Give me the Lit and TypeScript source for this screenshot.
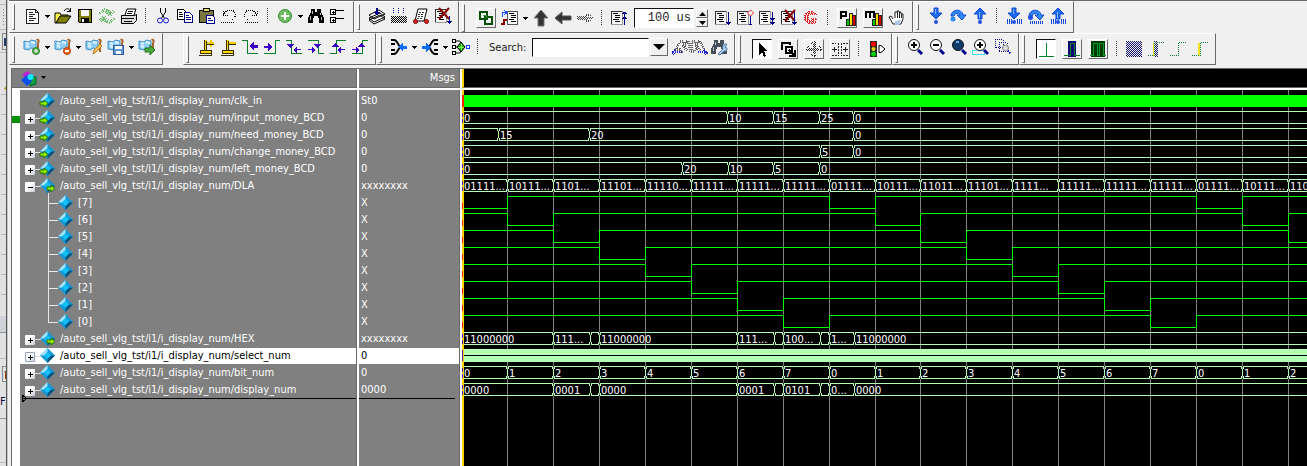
import { LitElement, html, svg, css, nothing } from "lit";
import { customElement, property } from "lit/decorators.js";

/* ---------- icons, all on an 18 x 18 grid ---------- */

const page = (x: number, y: number) => svg`
  <path d="M${x} ${y}h9l3 3v11h-12z" fill="#fff" stroke="#222"/>
  <path d="M${x + 9} ${y}v3h3" stroke="#222"/>
  <path d="M${x + 2} ${y + 3}h4M${x + 2} ${y + 5}h6M${x + 2} ${y + 7}h4M${x + 2} ${y + 9}h7M${x + 2} ${y + 11}h5" stroke="#222"/>`;

const listing = svg`
  <path d="M1 2h11v14H1z" fill="#f6f6f6"/><path d="M12.500 2v14M1 15.500h11" stroke="#999"/><path d="M1.500 2v13M1 2.500h11" stroke="#333"/>
  <path d="M3 4.500h5M5 6.500h5M5 8.500h5M3 10.500h6M5 12.500h5" stroke="#000"/>`;

const flags = svg`
  <path d="M1 3l5 1 2-2 5 1v8l-5-1-2 2-5-1z" fill="#8fcdf5" stroke="#4592c8" class="soft"/>
  <path d="M3 5l3 1M8 4l4 1M3 8l3 1" stroke="#dff3ff" stroke-width="2" class="soft"/>
  <path d="M13.500 2c2-1 3 1 1.500 3v9" stroke="#a8662a" stroke-width="2" class="soft"/>`;

const magnifier = (fill: string) => svg`
  <path d="M12 12l4 4" stroke="#00008b" stroke-width="3" class="soft"/>
  <circle cx="8" cy="7" r="5.500" fill="${fill}" stroke="#111" class="soft"/>`;

const bluedown = svg`<path d="M7 1h4v5h4l-6 6-6-6h4z" fill="#1e6bf0" stroke="#1449d8" class="soft"/><path d="M8 2v5" stroke="#79b8ff"/>`;
const blueup = svg`<path d="M9 1l6 6h-4v5H7V7H3z" fill="#1e6bf0" stroke="#1449d8" class="soft"/><path d="M8 5v6" stroke="#79b8ff"/>`;
const blueover = svg`<path d="M2 9c0-7 11-8 12-1h3l-4 5-5-5h3c-1-3-5-2-6 1z" fill="#2f8cf5" stroke="#1449d8" class="soft"/>`;
const ball = svg`<circle cx="9" cy="15" r="2" fill="#1e4fe8" class="soft"/>`;
const bars = svg`<path d="M2.500 12v5M4.500 12v5M6.500 12v5M12.500 12v5M14.500 12v5M16.500 12v5" stroke="#1449d8"/>`;
const graph = svg`<path d="M8 10h3v6H8z" fill="#0c0" stroke="#222"/><path d="M11 4h3v12h-3z" fill="#ffe000" stroke="#222"/><path d="M14 6h3v10h-3z" fill="#d00" stroke="#222"/>`;
const downnavy = svg`<path d="M14.500 3v13M12 13.500h5M13 14.500h3" stroke="#00008b"/>`;
const cross = svg`<path d="M5 1l10 11M15 1L5 12" stroke="#8b0000" stroke-width="2" class="soft"/>`;
const binoc = (c: string) => svg`<path d="M4 2h4v3h2V2h4v3l3 6v5h-5v-5h-1V9H7v2H6v5H1v-5l3-6z" fill="${c}"/><path d="M5.500 4v3M3.500 9v4M13.500 6v2M14.500 10v3" stroke="#bbb"/>`;
const pins = svg`<path d="M7.500 2v11" stroke="#3a3000"/><path d="M8.500 2v11" stroke="#ffd800" stroke-width="2"/><path d="M9.500 3v10" stroke="#3a3000"/>
  <path d="M3 12.500h11v3H3z" fill="#ffd800" stroke="#3a3000"/><path d="M2 17.500h12M14.500 13v5" stroke="#3a3000"/>`;

const ARROW = "#3b00c8";
const downHead = (x: number) => svg`<path d="M${x - 3} 6h7v1h-1v1h-1v1h-1v1h-1v-1h-1v-1h-1v-1h-1z" fill="${ARROW}"/>`;
const upHead = (x: number) => svg`<path d="M${x - 3} 9h7v-1h-1v-1h-1v-1h-1v-1h-1v1h-1v1h-1v1h-1z" fill="${ARROW}"/>`;
const fromRight = svg`<path d="M8 11.500h1v-1h1v-1h1v-1h1v6h-1v-1h-1v-1h-1v-1h-1zM12 11h4v1h-4z" fill="${ARROW}"/>`;
const fromLeft = svg`<path d="M9 11.500h-1v-1h-1v-1h-1v-1h-1v6h1v-1h1v-1h1v-1h1zM5 11H1v1h4z" fill="${ARROW}"/>`;

const ICONS: Record<string, unknown> = {
  doc: page(3.500, 2.500),
  open: svg`<path d="M1 6h5l1 2h7v2H6l-4 6H1z" fill="#fff34d" stroke="#000" class="soft"/><path d="M2 16l4-7h11l-5 7z" fill="#808000" stroke="#000" class="soft"/><path d="M10 4c2-3 5-3 6 0M13 4.500h4M16.500 1v4" stroke="#000" class="soft"/>`,
  save: svg`<path d="M2.500 2.500h13v13h-12l-1-1z" fill="#808000" stroke="#000"/><path d="M5 3h8v6H5z" fill="#f4f4f4"/><path d="M5 11h8v5H5z" fill="#000"/><path d="M6 12h2v3H6z" fill="#fff"/>`,
  recycle: svg`<path d="M2 7c4-6 8-5 10-1M16 11c-4 6-8 5-10 1M2 14l4-4 4 4M8 4l4 4 4-4" stroke="#6cbc6c" stroke-width="3" stroke-dasharray="1 1"/>`,
  print: svg`<path d="M5 8l2-6h9l-2 6" fill="#fff" stroke="#000" class="soft"/><path d="M8 4.500h5M7 6.500h5" stroke="#000"/><path d="M1.500 8.500h13l2-1v6l-3 3h-12z" fill="#ddd" stroke="#000" class="soft"/><path d="M2 11.500h12M4 14.500h8" stroke="#000"/>`,
  cut: svg`<path d="M6.500 1v4l4 6M11.500 1v4l-4 6" stroke="#000" class="soft"/><circle cx="6" cy="13.500" r="2.500" stroke="#1414d8" class="soft"/><circle cx="12" cy="13.500" r="2.500" stroke="#1414d8" class="soft"/>`,
  copy: svg`<path d="M1.500 2.500h6l2 2v8h-8z" fill="#fff" stroke="#000"/><path d="M3 5.500h3M3 7.500h4M3 9.500h4" stroke="#000"/><path d="M8.500 5.500h5l3 3v7h-8z" fill="#fff" stroke="#00008b"/><path d="M10 8.500h3M10 10.500h5M10 12.500h5" stroke="#00008b"/>`,
  paste: svg`<path d="M1.500 3.500h14v12h-14z" fill="#7d7840" stroke="#000"/><path d="M5 1.500h6v3H5z" fill="#e8e060" stroke="#000"/><path d="M8.500 8.500h6l2 2v6h-8z" fill="#fff" stroke="#00008b"/><path d="M10 11.500h3M10 13.500h5" stroke="#00008b"/>`,
  undo: svg`<path d="M4 6c3-4 10-4 11 0s-1 6-4 7M1 15.500h14M3 4v4h5M3 8l4-4" stroke="#000" stroke-dasharray="1 1"/>`,
  redo: svg`<path d="M14 6c-3-4-10-4-11 0s1 6 4 7M3 15.500h14M15 4v4h-5M15 8l-4-4" stroke="#000" stroke-dasharray="1 1"/>`,
  add: svg`<circle cx="9" cy="9" r="6.500" fill="#6dbb5f" stroke="#3c8f3c" class="soft"/><path d="M9 5v8M5 9h8" stroke="#fff" stroke-width="2"/>`,
  find: binoc("#000"),
  expand: svg`<path d="M1.500 2.500h5v5h-5zM1.500 10.500h5v5h-5z" fill="#fff" stroke="#000"/><path d="M3 5.500h3M4.500 4v3M3 13.500h3M4.500 12v3M7 3.500h8M7 11.500h8" stroke="#000"/>`,
  stack: svg`<path d="M1 13l5 4 11-5-5-4zM1 11l5 4 11-5-5-4zM1 8l5 4 11-5-6-4z" fill="#fff" stroke="#000" class="soft"/><path d="M8 1h2v4h2.500L9 9 5.500 5H8z" fill="#00008b"/>`,
  rain: svg`<path d="M3.500 1v6M8.500 1v6M13.500 1v6" stroke="#1414a0" stroke-dasharray="1 1"/><path d="M1 9.500h16M1 11.500h16M1 13.500h16M1 15.500h16" stroke="#000" stroke-dasharray="1 1"/><path d="M2 10.500h16M2 12.500h16M2 14.500h16" stroke="#000" stroke-dasharray="1 1"/>`,
  cart: svg`<path d="M6 2h9l-3 12H3z" fill="#fff" stroke="#000" class="soft"/><path d="M7 5h6M6 7h6M6 9h6M5 11h6" stroke="#333" stroke-dasharray="2 1"/><circle cx="3.500" cy="14.500" r="2" fill="#d22" stroke="#700" class="soft"/><circle cx="14.500" cy="14.500" r="2" fill="#d22" stroke="#700" class="soft"/>`,
  nocompile: svg`${listing}${cross}<path d="M15.500 9v8M13 14.500h5M14 15.500h3" stroke="#00008b"/>`,
  link: svg`<path d="M3 3h7v7H3z" stroke="#064f06" stroke-width="2"/><path d="M8 8h7v7H8z" stroke="#064f06" stroke-width="2"/><path d="M6 6h3v3" stroke="#3c9a3c"/>`,
  restart: svg`<path d="M6.500 2.500h10v13h-10z" fill="#fafafa" stroke="#555"/><path d="M8 4.500h5M10 6.500h5M10 8.500h5M8 10.500h5M10 12.500h5" stroke="#000"/><path d="M1.500 8V3.500H5M3 1l3 2.500L3 6" stroke="#1450ff"/><path d="M0 15h3V11h3" stroke="#8b0000" stroke-width="2"/>`,
  up: svg`<path d="M9 1l7 8h-4v8H6V9H2z" fill="#333" stroke="#777" class="soft"/>`,
  left: svg`<path d="M1 9l7-6v4h9v4H8v4z" fill="#333" stroke="#555" class="soft"/>`,
  right: svg`<path d="M1 7.500h9M2 8.500h15M1 9.500h15M2 10.500h9M10 5.500h3M10 6.500h5M10 11.500h5M10 12.500h3" stroke="#444" stroke-dasharray="1 1"/>`,
  runlen: svg`${listing}<path d="M14.500 3v13M12 4.500h5M12 9.500h5M13 3.500h3M13 8.500h3" stroke="#00008b"/>`,
  run: svg`${listing}${downnavy}`,
  runc: svg`${listing}<path d="M14.500 7v9M13 15.500h3" stroke="#00008b"/><path d="M14.500 1l3 3-3 3-3-3z" fill="#fff" stroke="#d22" class="soft"/>`,
  runall: svg`${listing}<path d="M14.500 3v13M12 9.500h5M12 13.500h5M13 14.500h3M13 10.500h3" stroke="#00008b"/>`,
  brk: svg`${listing}${cross}${downnavy}`,
  stop: svg`<path d="M5 3.500h8M4 5.500h11M3 7.500h4M3 9.500h4M3 11.500h10M5 13.500h9M9 9.500h6" stroke="#d22" stroke-dasharray="1 1"/><path d="M6 2.500h6M3 4.500h12M2 6.500h5M2 8.500h5M2 10.500h5M10 10.500h5M4 12.500h10M6 14.500h7" stroke="#d22" stroke-dasharray="2 1"/>`,
  perf: svg`${graph}<path d="M3 10V3h5v4H3" stroke="#000" stroke-width="2"/>`,
  mem: svg`${graph}<path d="M2 9V3h8v6M6 3v6" stroke="#000" stroke-width="2"/>`,
  hand: svg`<path d="M5 10L3 7 1 8l4 7h8l2-5V5h-2V3h-2V2H9v1H7v6" fill="#fff" stroke="#222" class="soft"/><path d="M9 3v6M11 3v6M13 5v4" stroke="#222"/><path d="M7 12l6-1-2 5H7z" fill="#a9c8e8"/>`,
  stepin: svg`${bluedown}${ball}`,
  stepover: svg`${blueover}<circle cx="4" cy="12" r="2.500" fill="#2f8cf5" class="soft"/>`,
  stepout: svg`${blueup}${ball}`,
  stepin2: svg`${bluedown}${ball}${bars}`,
  stepover2: svg`${blueover}<circle cx="3.500" cy="10.500" r="2.500" fill="#1e4fe8" class="soft"/><path d="M3 15h14" stroke="#1449d8" stroke-width="3" stroke-dasharray="1 1"/>`,
  stepout2: svg`${blueup}${ball}${bars}`,
  bmadd: svg`${flags}<circle cx="13" cy="13" r="3.500" fill="#5cb04f" stroke="#2f7f2f" class="soft"/><path d="M13 11v4M11 13h4" stroke="#fff" class="soft"/>`,
  bmdel: svg`${flags}<circle cx="13" cy="13" r="3.500" fill="#f0641e" stroke="#c03c00" class="soft"/><path d="M11 13h4" stroke="#fff" stroke-width="2"/>`,
  bmedit: svg`${flags}<path d="M8 16l1-4 6-6 2 2-6 6z" fill="#ffc05a" stroke="#b87820" class="soft"/>`,
  bmsave: svg`${flags}<path d="M6.500 7.500h10v9h-10z" fill="#5f93d8" stroke="#2f5fa8"/><path d="M8 8h7v3H8zM9 13h5v3H9z" fill="#fff"/>`,
  bmgo: svg`${flags}<path d="M7 10h5V7l5 5-5 5v-3H7z" fill="#4aa83a" stroke="#24701c" class="soft"/>`,
  cursadd: svg`${pins}<path d="M10 5h7M14 2v7" stroke="#f0cc00" stroke-width="2"/><path d="M10 6.500h7" stroke="#3a3000"/>`,
  cursdel: svg`${pins}<path d="M10 5h7" stroke="#f0cc00" stroke-width="2"/><path d="M10 6.500h7" stroke="#3a3000"/>`,
  prevedge: svg`<path d="M1 2.500h5v13h11" stroke="#0a7f2c"/><path d="M8 8l5-4v3h4v3h-4v3z" fill="${ARROW}"/>`,
  nextedge: svg`<path d="M1 15.500h11V2.500h5" stroke="#0a7f2c"/><path d="M10 9L5 5v3H1v2h4v3z" fill="${ARROW}"/>`,
  prevfall: svg`<path d="M1 2.500h5v13h11" stroke="#0a7f2c"/>${downHead(5)}${fromRight}`,
  nextfall: svg`<path d="M1 2.500h10v13h6" stroke="#0a7f2c"/>${downHead(10)}${fromLeft}`,
  prevrise: svg`<path d="M1 15.500h6V2.500h10" stroke="#0a7f2c"/>${upHead(6)}${fromRight}`,
  nextrise: svg`<path d="M1 15.500h10V2.500h6" stroke="#0a7f2c"/>${upHead(10)}${fromLeft}`,
  drivers: svg`<path d="M1 2h3c4 0 4 7 7 7-3 0-3 7-7 7H1M1 6h4M1 12h4" stroke="#000" stroke-width="2" class="soft"/><path d="M8 9l5-4v3h4v3h-4v3z" fill="#0a6cff"/>`,
  readers: svg`<path d="M17 2h-3c-4 0-4 7-7 7 3 0 3 7 7 7h3M17 6h-4M17 12h-4" stroke="#000" stroke-width="2" class="soft"/><path d="M10 9L5 5v3H1v3h4v3z" fill="#0a6cff"/>`,
  chase: svg`<path d="M3 3h4c3 0 2 5 6 6-4 1-3 6-6 6H3M3 9h5" stroke="#000" class="soft"/><path d="M.500 1.500h3v3h-3zM.500 7.500h3v3h-3zM.500 13.500h3v3h-3z" fill="#fff" stroke="#000"/><path d="M9 4l4 5-4 5-4-5z" fill="#1fa81f" stroke="#000" class="soft"/><path d="M9 6v6M6 9h6" stroke="#7dff4d"/><path d="M14.500 7.500h3v3h-3z" fill="#fff" stroke="#0a3cff"/>`,
  fprev: svg`<path d="M8 3h3v3h3V3h2l2 8v4M7 5l-3 6h4l2 4M11 7l4 6" stroke="#666" stroke-width="3" stroke-dasharray="1 1"/><path d="M1 14h9M3 12l-3 3 3 2" stroke="#22c" stroke-width="2" stroke-dasharray="1 1"/>`,
  fnext: svg`<path d="M2 3h3v3h3V3h2l4 8M1 5v8h4l2-4M6 7l4 6" stroke="#666" stroke-width="3" stroke-dasharray="1 1"/><path d="M8 14h9M14 12l3 3-3 2" stroke="#22c" stroke-width="2" stroke-dasharray="1 1"/>`,
  fopt: svg`${binoc("#444e58")}<path d="M8 16l5-5c-1-4 1-5 4-5l-2 3 2 1c0 3-1 3-3 3l-4 4z" fill="#a9cdf0" stroke="#5580a8" class="soft"/>`,
  pointer: svg`<path d="M6 3v12l3-3 2 5 2-1-2-5h4z" fill="#000"/>`,
  zoombox: svg`<path d="M3 10V3h8v2" stroke="#000" stroke-width="2"/><path d="M7 7h6v6H7z" stroke="#000" stroke-width="2"/><path d="M10 10l5 5M16 10v6h-6" stroke="#000" stroke-width="2"/>`,
  pan: svg`<path d="M9 1v16M1 9h16M6 4l3-3 3 3M6 14l3 3 3-3M4 6L1 9l3 3M14 6l3 3-3 3M8 4v10M10 4v10M4 8h10M4 10h10" stroke="#222" stroke-dasharray="1 1"/>`,
  twocur: svg`<path d="M1 3.500h4M7.500 3v13M10.500 3v13M12 3.500h5M1 15.500h5M12 15.500h5" stroke="#222" stroke-dasharray="2 1"/><path d="M1 9.500h5M12 9.500h5M3.500 7v5M14.500 7v5" stroke="#222"/>`,
  light: svg`<path d="M3 1h7v16H3z" fill="#282828"/><circle cx="6.500" cy="4" r="2.500" fill="#f00" class="soft"/><circle cx="6.500" cy="9" r="2" fill="#e6d800" class="soft"/><circle cx="6.500" cy="14" r="2.500" fill="#0c0" class="soft"/><path d="M12 5.500l2 0 4 3.500-4 3.500h-2z" fill="#fff" stroke="#000" class="soft"/>`,
  zin: svg`${magnifier("#fff")}<path d="M5 7h6M8 4v6" stroke="#000" stroke-width="2"/>`,
  zout: svg`${magnifier("#fff")}<path d="M5 7h6" stroke="#000" stroke-width="2"/>`,
  zfull: svg`${magnifier("#0d3a66")}<path d="M6 4h3" stroke="#6fa8dc" stroke-width="2"/>`,
  zcur: svg`<path d="M.500 12.500h12v4H.500z" stroke="#3fe0f0"/>${magnifier("#fff")}<path d="M5 7h6M8 4v6" stroke="#000" stroke-width="2"/>`,
  zsel: svg`<path d="M1 1.500h8v8H1zM5 4.500h8v9H5z" stroke="#00008b" stroke-dasharray="1 1"/><circle cx="11.500" cy="10" r="3" fill="#ddd" stroke="#888" class="soft"/><path d="M14 13l3 3" stroke="#1414c8" stroke-dasharray="1 1" stroke-width="2"/>`,
  w1: svg`<path d="M9.500 3v13M2 16.500h15" stroke="#0a7f2c"/>`,
  w2: svg`<path d="M5 1h8v16H5z" fill="#0a0a70"/><path d="M1 15.500h6V3.500h4v12h6" stroke="#0a7f2c"/>`,
  w3: svg`<path d="M2 1h14v16H2z" fill="#003c00"/><path d="M1 15.500h3V3.500h4v12h2V3.500h4v12h3" stroke="#0a9a2c"/>`,
  h1: svg`${[1, 3, 5, 7, 9, 11, 13, 15].map(y => svg`<path d="M1 ${y + 0.5}h16M2 ${y + 1.5}h16" stroke="#10106a" stroke-dasharray="1 1"/>`)}`,
  h2: svg`${[1, 3, 5, 7, 9, 11, 13, 15].map(y => svg`<path d="M7 ${y + 0.5}h4M8 ${y + 1.5}h4" stroke="#10106a" stroke-dasharray="1 1"/>`)}<path d="M6.500 3v13" stroke="#f0e020"/><path d="M1 15.500h6V2.500h10" stroke="#0a7f2c" stroke-dasharray="1 1"/>`,
  h3: svg`<path d="M1 15.500h8V2.500h8" stroke="#0a7f2c" stroke-dasharray="1 1"/>`,
  h4: svg`<path d="M8 3v13" stroke="#f0e020" stroke-width="2"/><path d="M1 15.500h8V2.500h8" stroke="#0a7f2c" stroke-dasharray="1 1"/>`,
};

const TITLES: Record<string, string> = { doc: "New", open: "Open", save: "Save", print: "Print", cut: "Cut", copy: "Copy", paste: "Paste", undo: "Undo", redo: "Redo", find: "Find" };

type Item = string; // "icon", "icon!" raised, "icon*" pressed, "icon~" narrow, "v" arrow, "|" separator

@customElement("tool-bar")
class ToolBar extends LitElement {
  @property({ attribute: false }) items: Item[] = [];
  @property({ attribute: false }) more: Item[] = [];

  static styles = css`
    :host { display: flex; align-items: center; box-sizing: border-box; flex: none; border-style: solid; border-width: 1px;
      border-color: #fff #696969 #696969 #fff; padding: 0 4px 2px 2px; background: #f0f0f0; font: 11px "DejaVu Sans Condensed", "DejaVu Sans", sans-serif; }
    :host(.low) { padding-bottom: 4px; }
    :host(.tall) { padding: 2px 4px 0 2px; }
    :host(.tall.low) { padding-top: 0; }
    .grip { align-self: stretch; width: 3px; box-sizing: border-box; border: 1px solid; border-color: #fff #696969 #696969 #fff; margin: 2px 6px 0 0; }
    :host(.low) .grip { margin-bottom: -3px; }
    :host(.tall) .grip { margin: 0 8px 0 0; }
    :host(.tall.low) .grip { margin: 1px 8px 1px 0; }
    button { display: block; border: 0; padding: 0; margin: 0; background: none; flex: none; }
    .tool { width: 22px; height: 20px; padding: 1px 2px; }
    .slim { width: 18px; padding: 1px 0; }
    .raised, .pressed { width: 20px; height: 20px; margin: 0 3px; padding: 0; border: 1px solid; border-color: #fff #696969 #696969 #fff; }
    .pressed { border-color: #111 #fff #fff #111; background: #fff; }
    .arrow { width: 9px; height: 20px; }
    .sep { width: 2px; height: 16px; margin: 0 5px; background: repeating-linear-gradient(#333 0 1px, transparent 1px 2px); background-size: 1px 100%; background-repeat: no-repeat; flex: none; }
    svg { display: block; fill: none; shape-rendering: crispEdges; }
    .soft { shape-rendering: auto; }
  `;

  private draw(list: Item[]) {
    return list.map(raw => {
      if (raw === "|") return html`<span class="sep"></span>`;
      if (raw === "v") return html`<button class="arrow" aria-label="More"><svg width="9" height="5"><path d="M2 1h5v1h-1v1h-1v1h-1v-1h-1v-1h-1z" fill="#000"/></svg></button>`;
      const mark = raw.slice(-1);
      const name = raw.replace(/[!*~]/g, "");
      const cls = mark === "!" ? "raised" : mark === "*" ? "pressed" : mark === "~" ? "tool slim" : "tool";
      return html`<button class=${cls} aria-label=${TITLES[name] ?? name}><svg width="18" height="18" viewBox="0 0 18 18">${ICONS[name]}</svg></button>`;
    });
  }

  render() {
    return html`<span class="grip"></span>${this.draw(this.items)}<slot></slot>${this.draw(this.more)}`;
  }
}

/* ---------- signals ---------- */

interface Signal {
  name: string; value: string; kind: "clock" | "bus" | "bit" | "dense";
  icon?: "in" | "out" | "plain"; toggle?: string; child?: boolean; selected?: boolean;
  edges?: number[]; labels?: string[]; bit?: number;
}

const P = "/auto_sell_vlg_tst/i1/i_display_num/";
const ORIGIN = 462;
const grid = Array.from({ length: 60 }, (_, i) => Math.round(507 + i * 45.94) - ORIGIN);
const slots = [0, ...grid];
const shown = grid.slice(0, 18);
const at = (...xs: number[]) => xs.map(x => x - ORIGIN);
const digitEdges = at(553, 590, 599, 737, 774, 783, 820, 829, 854);

const SIGNALS: Signal[] = [
  { name: P + "clk_in", value: "St0", kind: "clock", icon: "in" },
  { name: P + "input_money_BCD", value: "0", kind: "bus", icon: "in", toggle: "+", edges: at(727, 773, 819, 853), labels: ["0", "10", "15", "25", "0"] },
  { name: P + "need_money_BCD", value: "0", kind: "bus", icon: "in", toggle: "+", edges: at(498, 589, 853), labels: ["0", "15", "20", "0"] },
  { name: P + "change_money_BCD", value: "0", kind: "bus", icon: "in", toggle: "+", edges: at(820, 853), labels: ["0", "5", "0"] },
  { name: P + "left_money_BCD", value: "0", kind: "bus", icon: "in", toggle: "+", edges: at(682, 728, 773, 819), labels: ["0", "20", "10", "5", "0"] },
  { name: P + "DLA", value: "xxxxxxxx", kind: "bus", icon: "out", toggle: "-", edges: shown,
    labels: ["01111...", "10111...", "1101...", "11101...", "11110...", "11111...", "11111...", "11111...", "01111...", "10111...", "11011...", "11101...", "1111...", "11111...", "11111...", "11111...", "01111...", "10111...", "11011..."] },
  ...[7, 6, 5, 4, 3, 2, 1, 0].map(b => ({ name: `[${b}]`, value: "X", kind: "bit", child: true, bit: b }) as Signal),
  { name: P + "HEX", value: "xxxxxxxx", kind: "bus", icon: "out", toggle: "+", edges: digitEdges, labels: ["11000000", "111...", "", "11000000", "111...", "", "100...", "", "1...", "11000000"] },
  { name: P + "select_num", value: "0", kind: "dense", icon: "plain", toggle: "+", selected: true },
  { name: P + "bit_num", value: "0", kind: "bus", icon: "plain", toggle: "+", edges: shown, labels: Array.from({ length: 19 }, (_, i) => String(i % 8)) },
  { name: P + "display_num", value: "0000", kind: "bus", icon: "plain", toggle: "+", edges: digitEdges, labels: ["0000", "0001", "", "0000", "0001", "", "0101", "", "0...", "0000"] },
];

const END = 2600;

const diamond = (cx: number) => svg`
  <path d="M${cx - 7.5} 7.500l7.500-7.500 7.500 7.500-7.500 7.500z" fill="#1499d8"/>
  <path d="M${cx - 7.5} 7.500l7.500-7.500v4l-3.500 3.500z" fill="#a5e4fb"/>
  <path d="M${cx} 15l7.500-7.500h-4l-3.500 3.500z" fill="#06527a"/>
  <path d="M${cx - 3.5} 7.500l3.500-3.500 3.500 3.500-3.500 3.500z" fill="#12c0f8"/>`;
const greenArrow = (x: number, y: number) => svg`<path d="M${x} ${y + 2}h4v-2l4 3.500-4 3.500v-2h-4z" fill="#8cf000" stroke="#2c7000"/>`;

@customElement("app-root")
class AppRoot extends LitElement {
  static styles = css`
    :host { display: grid; grid-template-columns: 6px 1px 1fr; height: 100vh; overflow: hidden; background: #f0f0f0; color: #fff;
      font: 11px/17px "DejaVu Sans Condensed", "DejaVu Sans", sans-serif; }
    .behind { display: block; background: #e2e2e2; overflow: hidden; height: 100vh; width: 6px; }
    .rim { background: #555; }
    .window { display: flex; flex-direction: column; min-width: 0; border-left: 1px solid #c8c8c8; padding-left: 1px; box-sizing: border-box; }
    .bars { display: flex; height: 33px; box-sizing: border-box; border-top: 1px solid #696969; }
    .bars.second { height: 32px; border: 0; }
    .apart { margin-left: 20px; }
    .time { width: 60px; height: 20px; box-sizing: border-box; margin: 0 2px 0 4px; border: 1px solid; border-color: #111 #fff #fff #111; padding: 0 2px; text-align: right; font: 12px "Liberation Mono", monospace; color: #222; background: #fff; }
    .spin { display: grid; grid-template-rows: 9px 9px; width: 12px; margin-right: 4px; }
    .spin button, .drop { padding: 0; margin: 0; border: 1px solid; border-color: #fff #696969 #696969 #fff; background: #f0f0f0; display: grid; place-items: center; }
    .find { display: flex; align-items: center; color: #222; }
    .find label { margin: 0 6px 0 5px; }
    .find input { width: 117px; height: 19px; box-sizing: border-box; border: 1px solid; border-color: #111 #fff #fff #111; padding: 0 3px; font: inherit; background: #fff; }
    .drop { width: 18px; height: 18px; margin: 0 4px 0 1px; }
    .pane { flex: 1; min-height: 0; margin: 3px 0 0 2px; border: solid #696969; border-width: 1px 0 0 1px; display: grid; grid-template-columns: 347px 103px 1fr; grid-template-rows: 21px 1fr; background: #fff; }
    .head { background: #808080; border-bottom: 1px solid #696969; height: 18px; line-height: 18px; }
    .names, .values { margin-right: 2px; border-right: 1px solid #696969; min-width: 0; }
    .values { padding: 0 4px 0 2px; }
    .head.values { text-align: right; }
    .black { background: #000; border-left: 2px solid #ffd200; }
    .group { border: 0; background: none; padding: 0 0 0 8px; display: flex; align-items: center; height: 18px; }
    .body { background: #808080; }
    .tree { display: flex; overflow: hidden; }
    .gutter { width: 8px; flex: none; background: #fff; }
    .mark { height: 7px; margin-top: 26px; background: #009000; }
    .rows { flex: 1; padding-top: 3px; margin: 0; min-width: 0; }
    .values.body { padding: 3px 0 0 0; }
    .row { display: flex; height: 17px; line-height: 15px; white-space: nowrap; }
    .values .row { padding-left: 2px; }
    .on { background: #fff; color: #000; height: 16px; margin-bottom: 1px; }
    .toggle { width: 10px; height: 10px; margin: 4px 0 0 5px; padding: 0; border: 0; border-radius: 1px; background: linear-gradient(135deg, #fff 40%, #c8ccd8); display: block; flex: none; }
    .on .toggle { box-shadow: inset 0 0 0 1px #9aa4bc; }
    .none { background: none; }
    .insert { display: block; width: 100%; margin-top: -4px; }
    .wave { display: block; width: 100%; height: 100%; min-width: 0; background: #000; overflow: hidden; shape-rendering: crispEdges; }
    .wave text { fill: #fff; font: 11px "DejaVu Sans Condensed", "DejaVu Sans", sans-serif; }
    svg { display: block; flex: none; }
    .icon { shape-rendering: crispEdges; }
  `;

  private twig(s: Signal) {
    if (s.child) {
      const last = s.bit === 0;
      return html`<svg width="58" height="17"><path d="M28.500 0v${last ? 8.5 : 17}M28 8.500h10" stroke="#e8e8e8" fill="none" class="icon"/>${diamond(45.5)}</svg>`;
    }
    const plus = s.toggle === "+";
    return html`
      ${s.toggle
        ? html`<button class="toggle" aria-label=${plus ? "Expand" : "Collapse"}><svg width="10" height="10"><path d=${plus ? "M3 5.500h5M5.500 3v5" : "M3 5.500h5"} stroke="#000" class="icon"/></svg></button>`
        : html`<span class="toggle none"></span>`}
      <svg width="25" height="17">
        ${s.toggle ? svg`<path d="M0 8.500h6" stroke="#e0e0e0" class="icon"/>` : nothing}
        ${plus || !s.toggle ? nothing : svg`<path d="M13.500 15v2" stroke="#e0e0e0"/>`}
        ${diamond(12.5)}
        ${s.icon === "in" ? greenArrow(5, 7) : s.icon === "out" ? greenArrow(12, 7) : nothing}
      </svg>`;
  }

  private bar(x: number, y: number, w: number, h: number, c: string) {
    return svg`<rect x=${x} y=${y} width=${w} height=${h} fill=${c}/>`;
  }

  private trace(s: Signal, i: number) {
    const y = 3 + 17 * i;
    const pale = "#b4ffb4";
    if (s.kind === "clock") return svg`${this.bar(0, y + 2, 2, 12, "#ff2000")}${this.bar(2, y + 2, END, 12, "#00ff00")}`;
    if (s.kind === "dense") return svg`${this.bar(2, y + 1, END, 13, pale)}${this.bar(2, y + 7, END, 1, "#000")}${this.bar(0, y + 2, 1, 11, "#4020c0")}`;
    if (s.kind === "bit") {
      const low = (m: number) => m % 8 === 7 - s.bit!;
      let d = `M2 ${y + (low(0) ? 13.5 : 1.5)}`;
      slots.slice(1).forEach((x, m) => { d += `H${x + 0.5}`; if (low(m) !== low(m + 1)) d += `V${y + (low(m + 1) ? 13.5 : 1.5)}`; });
      return svg`${this.bar(0, y + 8, 1, 6, "#ff2000")}<path d=${d} stroke="#00ff00" fill="none"/>`;
    }
    const edges = s.edges!;
    const bounds = [2, ...edges, END];
    return svg`
      ${this.bar(0, y + 3, 1, 4, "#4020c0")}${this.bar(0, y + 9, 1, 4, "#4020c0")}
      ${bounds.slice(0, -1).map((x, k) => {
        const from = k ? x + 1 : x, w = bounds[k + 1] - from;
        return svg`${this.bar(from, y + 1, w, 1, pale)}${this.bar(from, y + 13, w, 1, pale)}`;
      })}
      ${edges.map(x => svg`${this.bar(x, y + 1, 1, 1, "#000")}${this.bar(x, y + 13, 1, 1, "#000")}
        ${[x - 1, x + 1].map(e => svg`${this.bar(e, y + 1, 1, 3, pale)}${this.bar(e, y + 11, 1, 3, pale)}`)}${this.bar(x, y + 4, 1, 7, pale)}`)}
      ${s.labels!.map((t, k) => t ? svg`<text x=${bounds[k] + (k ? 2 : 0)} y=${y + 12}>${t}</text>` : nothing)}`;
  }

  private behind() {
    return html`<svg class="behind" aria-hidden="true">
      ${[9, 12, 15, 18, 21, 24].map(y => svg`<rect x="3" y=${y} width="1" height="1" fill="#888"/>`)}
      <path d="M0 4.500h6M0 29.500h6M0 52.500h6" stroke="#bbb"/><path d="M2.500 33v16M2 33.500h4M2 49.500h4" stroke="#888" fill="none"/>
      <rect x="4" y="38" width="2" height="8" fill="#223a6a"/><path d="M4 89l2-3v4z" fill="#b8962c"/>
      ${[94, 114, 134, 154, 174, 194, 214, 234, 254, 274, 294].map(y => svg`<rect x="1" y=${y} width="5" height="1" fill="#b8b8b8"/>`)}
      <rect y="316" width="6" height="16" fill="#cfd2d6"/><rect y="332" width="6" height="1" fill="#8c96a4"/><rect y="358" width="6" height="1" fill="#bbb"/>
      <path d="M2.500 366v16M2 366.500h4M2 381.500h4M4 371.500h2" stroke="#888" fill="none"/><rect x="5" y="371" width="1" height="8" fill="#a04000"/>
      <text x="0" y="405" fill="#10104a" font-size="11">Fl</text><rect y="418" width="6" height="1" fill="#8c96a4"/><rect y="462" width="6" height="1" fill="#bbb"/>
    </svg>`;
  }

  render() {
    return html`
      ${this.behind()}<div class="rim"></div>
      <div class="window">
        <div class="bars">
          <tool-bar .items=${["doc", "v", "open", "save", "recycle", "print", "|", "cut", "copy", "paste", "undo", "redo", "|", "add", "v", "find", "expand"]}></tool-bar>
          <tool-bar .items=${["stack", "rain", "cart", "nocompile"]}></tool-bar>
          <tool-bar class="tall" .items=${["link!", "restart", "v", "up", "left", "right", "|", "runlen"]}
            .more=${["run", "runc", "runall", "brk", "stop", "|", "perf!", "mem!", "hand"]}>
            <input class="time" aria-label="Run length" value="100 us">
            <div class="spin">
              <button aria-label="Increase"><svg width="7" height="4"><path d="M0 4h7L3.500 0z"/></svg></button>
              <button aria-label="Decrease"><svg width="7" height="4"><path d="M0 0h7L3.500 4z"/></svg></button>
            </div>
          </tool-bar>
          <tool-bar .items=${["stepin", "stepover", "stepout", "|", "stepin2", "stepover2", "stepout2"]}></tool-bar>
        </div>
        <div class="bars second">
          <tool-bar class="low" .items=${["bmadd", "v", "bmdel", "v", "bmedit", "bmsave", "v", "bmgo"]}></tool-bar>
          <tool-bar class="low apart" .items=${["cursadd", "cursdel", "prevedge", "nextedge", "prevfall", "nextfall", "prevrise", "nextrise"]}></tool-bar>
          <tool-bar class="low" .items=${["drivers", "v", "readers", "v", "chase", "|"]} .more=${["fprev~", "fnext~", "fopt"]}>
            <div class="find">
              <label for="q">Search:</label><input id="q" type="text">
              <button class="drop" aria-label="Search history"><svg width="12" height="6"><path d="M0 0h12L6 6z"/></svg></button>
            </div>
          </tool-bar>
          <tool-bar class="low tall" .items=${["pointer*", "zoombox!", "pan!", "twocur!", "|", "light"]}></tool-bar>
          <tool-bar class="low" .items=${["zin", "zout", "zfull", "zcur", "zsel"]}></tool-bar>
          <tool-bar class="low tall" .items=${["w1*", "w2!", "w3!", "|", "h1", "h2", "h3", "h4"]}></tool-bar>
        </div>
        <div class="pane">
          <div class="head names">
            <button class="group" aria-label="Objects">
              <svg width="18" height="17"><path d="M2 5l5-4 4 3-4 5z" fill="#c020d8"/><path d="M10 7h6v7l-6 2z" fill="#12a040" stroke="#063"/><path d="M1 10l6-5 5 6-5 5z" fill="#0a50e8"/><circle cx="10.500" cy="7" r="3" fill="#10e8ff"/></svg>
              <svg width="10" height="4"><path d="M3 0h5L5.500 3z"/></svg>
            </button>
          </div>
          <div class="head values">Msgs</div>
          <div class="head black"></div>
          <div class="body names tree">
            <div class="gutter"><div class="mark"></div></div>
            <div class="rows">
              ${SIGNALS.map(s => html`<div class="row ${s.selected ? "on" : ""}">${this.twig(s)}<span>${s.name}</span></div>`)}
              <svg class="insert" height="7"><path d="M2 3.500h2000M2.500 0v7l4-3.500z" stroke="#000" fill="#808080" class="icon"/></svg>
            </div>
          </div>
          <div class="body values">
            ${SIGNALS.map(s => html`<div class="row ${s.selected ? "on" : ""}">${s.value}</div>`)}
            <svg class="insert" height="7"><path d="M0 3.500h96" stroke="#000" class="icon"/></svg>
          </div>
          <svg class="wave" role="img" aria-label="Waveforms">
            ${grid.map(x => svg`<rect x=${x} y="0" width="1" height="100%" fill="#808080"/>`)}
            <rect x="0" y="0" width="2" height="100%" fill="#ffd200"/>
            ${SIGNALS.map((s, i) => this.trace(s, i))}
          </svg>
        </div>
      </div>`;
  }
}
